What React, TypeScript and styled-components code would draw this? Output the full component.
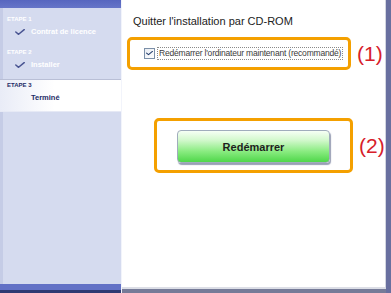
import styled, { createGlobalStyle } from "styled-components";

const GlobalStyle = createGlobalStyle`
  html, body {
    margin: 0;
    padding: 0;
    background: #ffffff;
  }
  body {
    font-family: "Liberation Sans", Arial, sans-serif;
  }
`;

const Frame = styled.div`
  width: 391px;
  height: 293px;
  display: flex;
  overflow: hidden;
`;

const Sidebar = styled.aside`
  width: 121px;
  display: flex;
  flex-direction: column;
  background: linear-gradient(to right, #c5cce6 0 3px, #d5dbef 3px);
`;

const SideTopBand = styled.div`
  height: 8px;
  background: linear-gradient(#5766bf, #6675c8);
`;

const Steps = styled.ol`
  list-style: none;
  margin: 5px 0 0;
  padding: 0;
  flex: 1;
`;

const Step = styled.li<{ $active?: boolean }>`
  height: 33px;
  box-sizing: border-box;
  padding: 2px 0 0 7px;
  ${(p) =>
    p.$active &&
    `
    background: linear-gradient(to right, #e9ecf7 0%, #ffffff 45%, #ffffff 100%);
    border-top: 1px solid #b9bfd6;
    border-bottom: 1px solid #e6e9f5;
    padding-top: 1px;
  `}
`;

const StepLabel = styled.div<{ $active?: boolean }>`
  font-size: 6px;
  line-height: 9px;
  font-weight: bold;
  color: ${(p) => (p.$active ? "#1d2a66" : "#ffffff")};
`;

const StepLine = styled.div`
  display: flex;
  align-items: center;
  height: 11px;
  margin-top: 2px;
`;

const CheckSlot = styled.span`
  width: 23px;
  display: flex;
  justify-content: center;
  padding-left: 1px;
`;

const StepName = styled.span<{ $active?: boolean }>`
  font-size: 7.5px;
  font-weight: bold;
  color: ${(p) => (p.$active ? "#1d2a66" : "#ffffff")};
`;

const SideBottomBand = styled.div`
  height: 9px;
  background: linear-gradient(#6271c6 0 6px, #2e3972 6px);
`;

const Divider = styled.div`
  width: 1px;
  background: #f2f4fb;
`;

const Content = styled.main`
  flex: 1;
  display: flex;
  flex-direction: column;
  border-right: 5px solid #686f9f;
`;

const Panel = styled.section`
  flex: 1;
  background: #ffffff;
  border-right: 1px solid #d3d6e0;
  border-bottom: 2px solid #dcdee6;
  padding: 14px 0 0 0;
`;

const BottomEdge = styled.div`
  height: 4px;
  background: #767b98;
`;

const Title = styled.h1`
  margin: 0 0 9px 11px;
  font-size: 11px;
  line-height: 14px;
  font-weight: normal;
  color: #222222;
`;

const Row = styled.div<{ $indent: number; $gap: number; $top?: number }>`
  display: flex;
  align-items: center;
  margin-left: ${(p) => p.$indent}px;
  margin-top: ${(p) => p.$top ?? 0}px;
  gap: ${(p) => p.$gap}px;
`;

const Callout = styled.div<{ $w: number; $h: number; $pad: number }>`
  width: ${(p) => p.$w}px;
  height: ${(p) => p.$h}px;
  flex-shrink: 0;
  box-sizing: border-box;
  border: 3px solid #f4a000;
  border-radius: 5px;
  display: flex;
  align-items: center;
  padding-left: ${(p) => p.$pad}px;
`;

const Marker = styled.span`
  font-size: 21px;
  color: #d7202a;
  line-height: 22px;
`;

const CheckRow = styled.label`
  display: flex;
  align-items: center;
  gap: 2px;
`;

const CheckBox = styled.span`
  width: 9px;
  height: 9px;
  border: 1px solid #7b8fa8;
  background: linear-gradient(135deg, #e8ecf2, #ffffff);
  display: flex;
  align-items: center;
  justify-content: center;
`;

const CheckText = styled.span`
  font-size: 8.5px;
  letter-spacing: -0.2px;
  line-height: 11px;
  color: #3a3a3a;
  border: 1px dotted #8a8a8a;
  padding: 0 1px;
  white-space: nowrap;
`;

const RestartButton = styled.button`
  width: 153px;
  height: 33px;
  margin-top: 2px;
  border: 1px solid #a0acbc;
  border-radius: 4px;
  background: linear-gradient(
    #f6fff5 0%,
    #d2f8cc 30%,
    #8bec82 65%,
    #4fd74a 100%
  );
  box-shadow: 1px 2px 1px rgba(70, 80, 120, 0.55);
  font-family: "Liberation Sans", Arial, sans-serif;
  font-size: 11px;
  font-weight: bold;
  color: #1e1e1e;
  padding: 0;
`;

const Tick = ({ size, color }: { size: number; color: string }) => (
  <svg width={size} height={size * 0.6} viewBox="0 0 10 6">
    <path
      d="M0.8 3 L3.6 5.3 L9.2 0.6"
      fill="none"
      stroke={color}
      strokeWidth="1.5"
      strokeLinecap="round"
      strokeLinejoin="round"
    />
  </svg>
);

const steps = [
  { label: "ETAPE 1", name: "Contrat de licence", done: true },
  { label: "ETAPE 2", name: "Installer", done: true },
  { label: "ETAPE 3", name: "Terminé", done: false, active: true },
];

export default function App() {
  return (
    <>
      <GlobalStyle />
      <Frame>
        <Sidebar>
          <SideTopBand />
          <Steps>
            {steps.map((s) => (
              <Step key={s.label} $active={s.active}>
                <StepLabel $active={s.active}>{s.label}</StepLabel>
                <StepLine>
                  <CheckSlot>{s.done && <Tick size={10} color="#4a5592" />}</CheckSlot>
                  <StepName $active={s.active}>{s.name}</StepName>
                </StepLine>
              </Step>
            ))}
          </Steps>
          <SideBottomBand />
        </Sidebar>
        <Divider />
        <Content>
          <Panel>
            <Title>Quitter l'installation par CD-ROM</Title>
            <Row $indent={5} $gap={6}>
              <Callout $w={224} $h={33} $pad={14}>
                <CheckRow>
                  <CheckBox>
                    <Tick size={7} color="#1f3a6a" />
                  </CheckBox>
                  <CheckText>Redémarrer l'ordinateur maintenant (recommandé)</CheckText>
                </CheckRow>
              </Callout>
              <Marker>(1)</Marker>
            </Row>
            <Row $indent={32} $gap={6} $top={48}>
              <Callout $w={199} $h={55} $pad={20}>
                <RestartButton>Redémarrer</RestartButton>
              </Callout>
              <Marker>(2)</Marker>
            </Row>
          </Panel>
          <BottomEdge />
        </Content>
      </Frame>
    </>
  );
}
